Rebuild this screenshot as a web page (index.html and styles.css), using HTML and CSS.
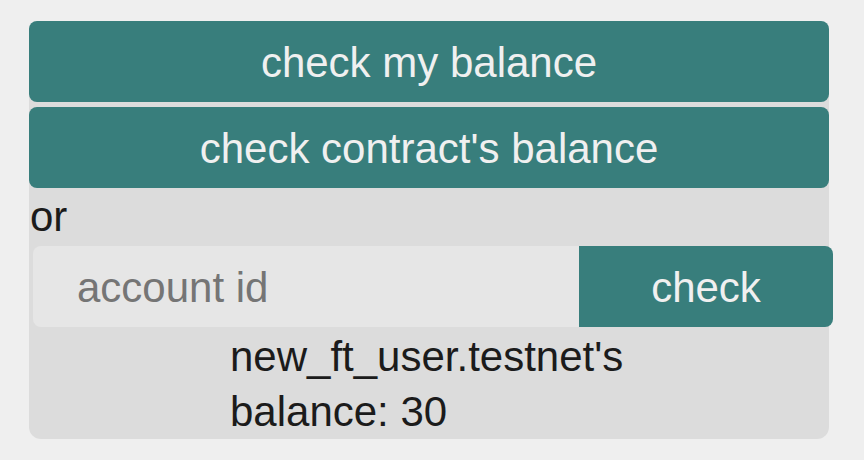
FILE: index.html
```html
<!DOCTYPE html>
<html>
<head>
<meta charset="utf-8">
<link rel="stylesheet" href="styles.css">
</head>
<body>
<div class="panel">
  <button class="btn btn-full">check my balance</button>
  <button class="btn btn-full">check contract's balance</button>
  <div class="or">or</div>
  <form class="row">
    <input class="field" type="text" placeholder="account id">
    <button class="btn btn-check" type="button">check</button>
  </form>
  <p class="result">new_ft_user.testnet's<br>balance: 30</p>
</div>
</body>
</html>
```

FILE: styles.css
```css
html, body {
  margin: 0;
  background: #efefef;
}
body {
  padding: 21px 35px 0 29px;
  font-family: "Liberation Sans", Arial, Helvetica, sans-serif;
  font-size: 42px;
  color: #1b1b1b;
}
.panel {
  width: 800px;
  height: 418px;
  background: #dcdcdc;
  border-radius: 12px;
  display: flex;
  flex-direction: column;
  gap: 5px;
}
.btn {
  font-family: inherit;
  font-size: 42px;
  background: #387e7c;
  color: #f0f0f0;
  border: none;
  border-radius: 8px;
  display: flex;
  align-items: center;
  justify-content: center;
  padding: 2px 0 0 0;
  margin: 0;
}
.btn-full {
  width: 100%;
  height: 81px;
}
.or {
  line-height: 58px;
  margin-top: -5px;
  margin-bottom: -5px;
  padding-left: 1px;
}
.row {
  display: flex;
  height: 81px;
  margin: 0 -4px 0 4px;
}
.field {
  flex: 1;
  min-width: 0;
  border: none;
  border-radius: 8px 0 0 8px;
  background: #e6e6e6;
  font-family: inherit;
  font-size: 42px;
  padding: 2px 0 0 44px;
  margin: 0;
  color: #1b1b1b;
  outline: none;
}
.field::placeholder {
  color: #757575;
}
.btn-check {
  width: 254px;
  height: 81px;
  border-radius: 0 8px 8px 0;
}
.result {
  margin: -5px 0 0 0;
  padding: 2px 0 0 201px;
  line-height: 55px;
}
```
